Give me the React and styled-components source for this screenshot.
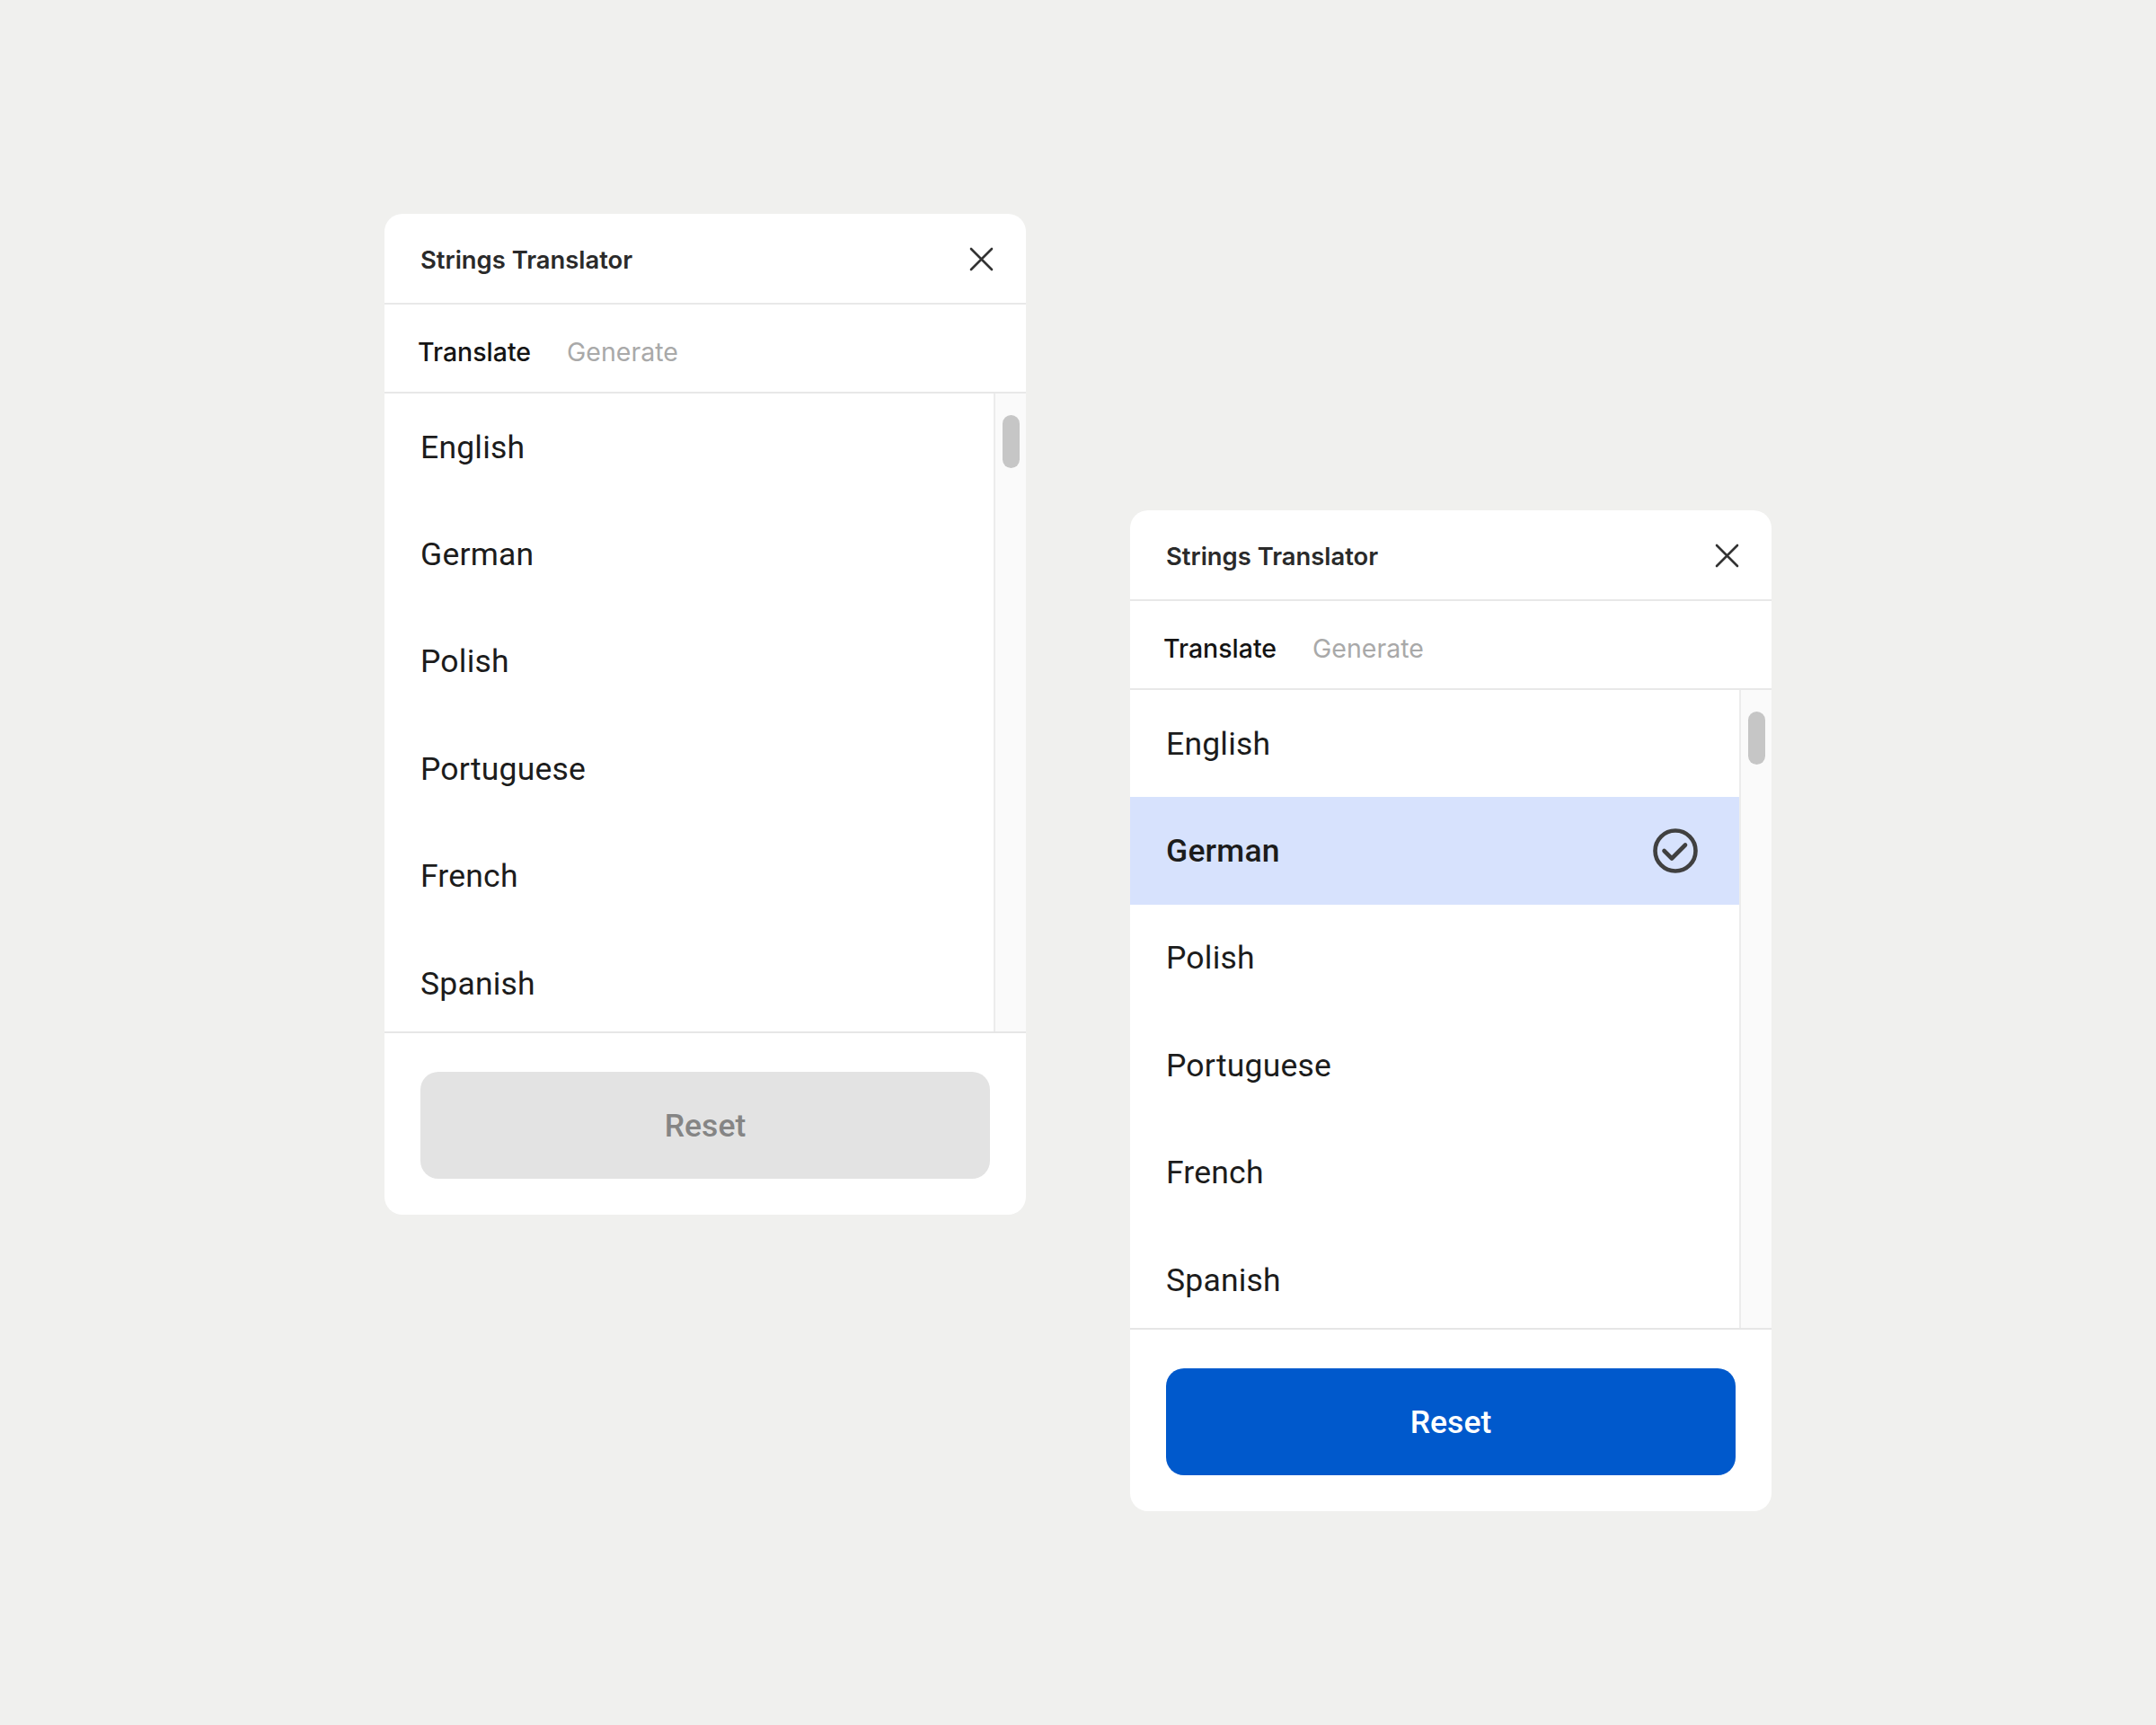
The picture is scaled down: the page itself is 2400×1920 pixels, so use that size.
import React, { useState } from "react";
import styled, { createGlobalStyle } from "styled-components";

const GlobalStyle = createGlobalStyle`
    html, body {
        margin: 0;
        padding: 0;
        background: #f0f0ee;
        font-family: Roboto, "Liberation Sans", Arial, sans-serif;
    }
    * { box-sizing: border-box; }
`;

const Page = styled.div`
    min-height: 100vh;
    display: flex;
    justify-content: center;
    align-items: center;
`;

const Stage = styled.div`
    display: flex;
    align-items: flex-start;
    gap: 116px;
`;

const Panel = styled.div`
    width: 714px;
    margin-top: ${(p) => p.$offset || 0}px;
    background: #fff;
    border-radius: 20px;
    overflow: hidden;
    display: flex;
    flex-direction: column;
`;

const Header = styled.div`
    height: 101px;
    display: flex;
    align-items: center;
    justify-content: space-between;
    padding: 2px 36px 0 40px;
    border-bottom: 2px solid #e8e8e8;
`;

const Title = styled.div`
    font-family: Inter, Roboto, sans-serif;
    font-size: 27.4px;
    font-weight: 600;
    color: #2a2a2a;
`;

const CloseButton = styled.button`
    border: none;
    background: none;
    padding: 0;
    width: 27px;
    height: 27px;
    display: flex;
    align-items: center;
    justify-content: center;
    cursor: pointer;
`;

const Tabs = styled.div`
    height: 99px;
    display: flex;
    align-items: center;
    gap: 40px;
    padding: 8px 0 0 37px;
    border-bottom: 2px solid #e8e8e8;
`;

const Tab = styled.div`
    font-family: Inter, Roboto, sans-serif;
    font-size: 28.5px;
    font-weight: ${(p) => (p.$active ? 500 : 400)};
    color: ${(p) => (p.$active ? "#141414" : "#a9a9a9")};
`;

const ListArea = styled.div`
    height: 712px;
    display: flex;
    border-bottom: 2px solid #e6e6e6;
`;

const Items = styled.div`
    flex: 1;
    overflow: hidden;
`;

const Item = styled.div`
    height: 119.4px;
    flex-shrink: 0;
    display: flex;
    align-items: center;
    justify-content: space-between;
    padding: 0 46px 0 40px;
    font-size: 35.5px;
    letter-spacing: 0.2px;
    font-weight: ${(p) => (p.$selected ? 500 : 400)};
    color: #1c1c1c;
    background: ${(p) => (p.$selected ? "#d7e2fd" : "transparent")};
    cursor: pointer;
`;

const Track = styled.div`
    width: 36px;
    background: #fafafa;
    border-left: 2px solid #ececec;
    padding: 24px 0 0 8px;
`;

const Thumb = styled.div`
    width: 19px;
    height: 59px;
    border-radius: 10px;
    background: #c6c6c6;
`;

const Footer = styled.div`
    padding: 43px 40px 40px 40px;
`;

const ResetButton = styled.button`
    width: 100%;
    height: 119px;
    border: none;
    border-radius: 20px;
    font-family: inherit;
    font-size: 35.5px;
    font-weight: 500;
    background: ${(p) => (p.$enabled ? "#0059cc" : "#e3e3e3")};
    color: ${(p) => (p.$enabled ? "#fff" : "#858585")};
    cursor: ${(p) => (p.$enabled ? "pointer" : "default")};
`;

const CloseIcon = () => (
    <svg width="27" height="27" viewBox="0 0 27 27">
        <path d="M2 2 L25 25 M25 2 L2 25" stroke="#333" strokeWidth="2.6" strokeLinecap="round" fill="none" />
    </svg>
);

const CheckIcon = () => (
    <svg width="50" height="50" viewBox="0 0 50 50">
        <circle cx="25" cy="25" r="22.5" stroke="#404040" strokeWidth="4.6" fill="none" />
        <path d="M12.5 25 L21 33.5 L36 18.5" stroke="#404040" strokeWidth="4.6" strokeLinecap="round" strokeLinejoin="round" fill="none" />
    </svg>
);

const languages = ["English", "German", "Polish", "Portuguese", "French", "Spanish"];

function Translator({ initial, offset }) {
    const [selected, setSelected] = useState(initial);

    return (
        <Panel $offset={offset}>
            <Header>
                <Title>Strings Translator</Title>
                <CloseButton>
                    <CloseIcon />
                </CloseButton>
            </Header>
            <Tabs>
                <Tab $active>Translate</Tab>
                <Tab>Generate</Tab>
            </Tabs>
            <ListArea>
                <Items>
                    {languages.map((lang) => (
                        <Item
                            key={lang}
                            $selected={lang === selected}
                            onClick={() => setSelected(lang === selected ? null : lang)}
                        >
                            {lang}
                            {lang === selected && <CheckIcon />}
                        </Item>
                    ))}
                </Items>
                <Track>
                    <Thumb />
                </Track>
            </ListArea>
            <Footer>
                <ResetButton $enabled={!!selected} onClick={() => setSelected(null)}>
                    Reset
                </ResetButton>
            </Footer>
        </Panel>
    );
}

export default function App() {
    return (
        <>
            <GlobalStyle />
            <Page>
                <Stage>
                    <Translator initial={null} />
                    <Translator initial="German" offset={330} />
                </Stage>
            </Page>
        </>
    );
}
